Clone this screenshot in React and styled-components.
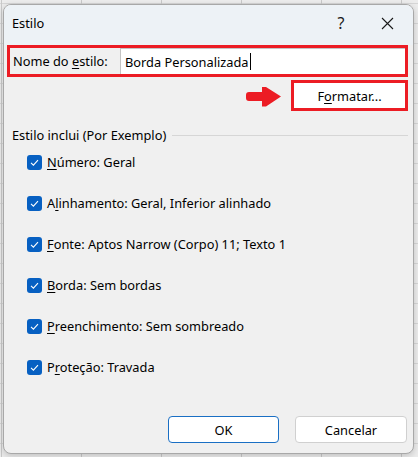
import React from "react";
import styled, { createGlobalStyle } from "styled-components";

const Global = createGlobalStyle`
  html, body { margin: 0; padding: 0; }
  body {
    width: 418px;
    height: 457px;
    overflow: hidden;
    background-color: #ececec;
    background-image:
      linear-gradient(to right, #c9c9c9 1px, transparent 1px),
      linear-gradient(to bottom, #d6d6d6 1px, transparent 1px);
    background-size: 80px 20px;
    background-position: 1px 3px;
    font-family: "Noto Sans", "Liberation Sans", sans-serif;
    color: #000;
  }
`;

const Dialog = styled.div`
  margin: 4px 0 0 3px;
  width: 411px;
  height: 450px;
  box-sizing: border-box;
  border: 1px solid #a8a8a8;
  border-radius: 8px;
  background: #f0f0f0;
  overflow: hidden;
  display: flex;
  flex-direction: column;
  box-shadow: 0 2px 6px rgba(0,0,0,0.18);
`;

const TitleBar = styled.div`
  height: 40px;
  flex: none;
  display: flex;
  align-items: center;
  padding: 0 3px 4px 8px;
  box-sizing: border-box;
  background: #edf2f6;
`;

const Title = styled.span`
  font-size: 12.8px;
  flex: 1;
`;

const TitleButton = styled.div`
  width: ${(p) => p.$w}px;
  height: 30px;
  display: flex;
  align-items: center;
  justify-content: center;
  font-size: 16px;
  color: #1a1a1a;
`;

const Content = styled.div`
  flex: 1;
  display: flex;
  flex-direction: column;
  padding: 0 5px 10px 3px;
`;

const RedBox = styled.div`
  box-sizing: border-box;
  border: 3px solid #ec1c24;
  height: ${(p) => p.$h}px;
  width: ${(p) => (p.$w ? `${p.$w}px` : "auto")};
  display: flex;
  align-items: stretch;
  background: ${(p) => p.$bg || "transparent"};
`;

const NameLabel = styled.label`
  width: 110px;
  flex: none;
  padding-left: 3px;
  box-sizing: border-box;
  display: flex;
  align-items: center;
  font-size: 12.8px;
`;

const NameInput = styled.div`
  flex: 1;
  background: #fff;
  border-top: 1px solid #c4c4c4;
  border-left: 1px solid #c4c4c4;
  display: flex;
  align-items: center;
  padding-left: 4px;
  font-size: 12.8px;
`;

const Caret = styled.span`
  display: inline-block;
  width: 1px;
  height: 17px;
  background: #000;
  margin-left: 1px;
`;

const ActionRow = styled.div`
  margin-top: 3px;
  display: flex;
  justify-content: flex-end;
  align-items: center;
  gap: 9px;
`;

const ArrowIcon = styled.svg`
  display: block;
  margin-top: 3px;
`;

const Button = styled.button`
  box-sizing: border-box;
  width: ${(p) => p.$w}px;
  height: ${(p) => p.$h}px;
  margin: 0;
  background: #fff;
  border: 1px solid ${(p) => (p.$primary ? "#1a6fc4" : p.$flat ? "transparent" : "#d0d0d0")};
  border-radius: ${(p) => (p.$flat ? "0" : "4px")};
  font-family: inherit;
  font-size: 12.8px;
  color: #000;
  padding: 0;
  display: flex;
  align-items: center;
  justify-content: center;
`;

const GroupHeader = styled.div`
  margin-top: 15px;
  display: flex;
  align-items: center;
  padding-left: 5px;
  font-size: 12.8px;
  line-height: 18px;
`;

const GroupLine = styled.div`
  flex: 1;
  height: 1px;
  background: #d6d6d6;
  margin-left: 6px;
  margin-top: 1px;
`;

const List = styled.div`
  margin-top: 8px;
  padding-left: 20px;
  display: flex;
  flex-direction: column;
  gap: 21px;
`;

const Row = styled.div`
  height: 20px;
  display: flex;
  align-items: center;
  gap: 5px;
  font-size: 12.8px;
`;

const Box = styled.span`
  width: 15px;
  height: 15px;
  border-radius: 3px;
  background: #0760c2;
  display: flex;
  align-items: center;
  justify-content: center;
  flex: none;
`;

const Footer = styled.div`
  margin-top: auto;
  display: flex;
  justify-content: flex-end;
  gap: 16px;
  padding-right: 1px;
`;

const U = styled.span`
  text-decoration: underline;
  text-underline-offset: 2px;
  text-decoration-thickness: 1px;
`;

function Check() {
  return (
    <Box>
      <svg width="15" height="15" viewBox="0 0 15 15">
        <path d="M4 7.8 L6.4 10.1 L11 5.2" fill="none" stroke="#fff" strokeWidth="1.1" />
      </svg>
    </Box>
  );
}

const items = [
  ["N", "úmero: Geral"],
  ["A", "l", "inhamento: Geral, Inferior alinhado"],
  ["F", "onte: Aptos Narrow (Corpo) 11; Texto 1"],
  ["B", "orda: Sem bordas"],
  ["P", "reenchimento: Sem sombreado"],
  ["P", "r", "oteção: Travada"],
];

function ItemText({ parts }) {
  if (parts.length === 3) {
    return (
      <span>
        {parts[0]}
        <U>{parts[1]}</U>
        {parts[2]}
      </span>
    );
  }
  return (
    <span>
      <U>{parts[0]}</U>
      {parts[1]}
    </span>
  );
}

export default function App() {
  return (
    <>
      <Global />
      <Dialog>
        <TitleBar>
          <Title>Estilo</Title>
          <TitleButton $w={46}>?</TitleButton>
          <TitleButton $w={46}>
            <svg width="13" height="13" viewBox="0 0 13 13">
              <path d="M1 1 L12 12 M12 1 L1 12" stroke="#1a1a1a" strokeWidth="1.1" />
            </svg>
          </TitleButton>
        </TitleBar>
        <Content>
          <RedBox $h={32}>
            <NameLabel>
              <span>
                Nome do <U>e</U>stilo:
              </span>
            </NameLabel>
            <NameInput>
              Borda Personalizada
              <Caret />
            </NameInput>
          </RedBox>
          <ActionRow>
            <ArrowIcon width="36" height="20" viewBox="0 0 36 20">
              <path
                d="M3 5 H16 V0 L20 0 L35 9.5 L20 19.5 L16 19.5 V14 H3 Q0 14 0 11 V8 Q0 5 3 5 Z"
                fill="#ec1c24"
              />
            </ArrowIcon>
            <RedBox $h={31} $w={117} $bg="#fff">
              <Button $w={111} $h={25} $flat>
                <span>
                  F<U>o</U>rmatar...
                </span>
              </Button>
            </RedBox>
          </ActionRow>
          <GroupHeader>
            <span>Estilo inclui (Por Exemplo)</span>
            <GroupLine />
          </GroupHeader>
          <List>
            {items.map((parts, i) => (
              <Row key={i}>
                <Check />
                <ItemText parts={parts} />
              </Row>
            ))}
          </List>
          <Footer>
            <Button $w={111} $h={27} $primary>
              OK
            </Button>
            <Button $w={112} $h={27}>
              Cancelar
            </Button>
          </Footer>
        </Content>
      </Dialog>
    </>
  );
}
